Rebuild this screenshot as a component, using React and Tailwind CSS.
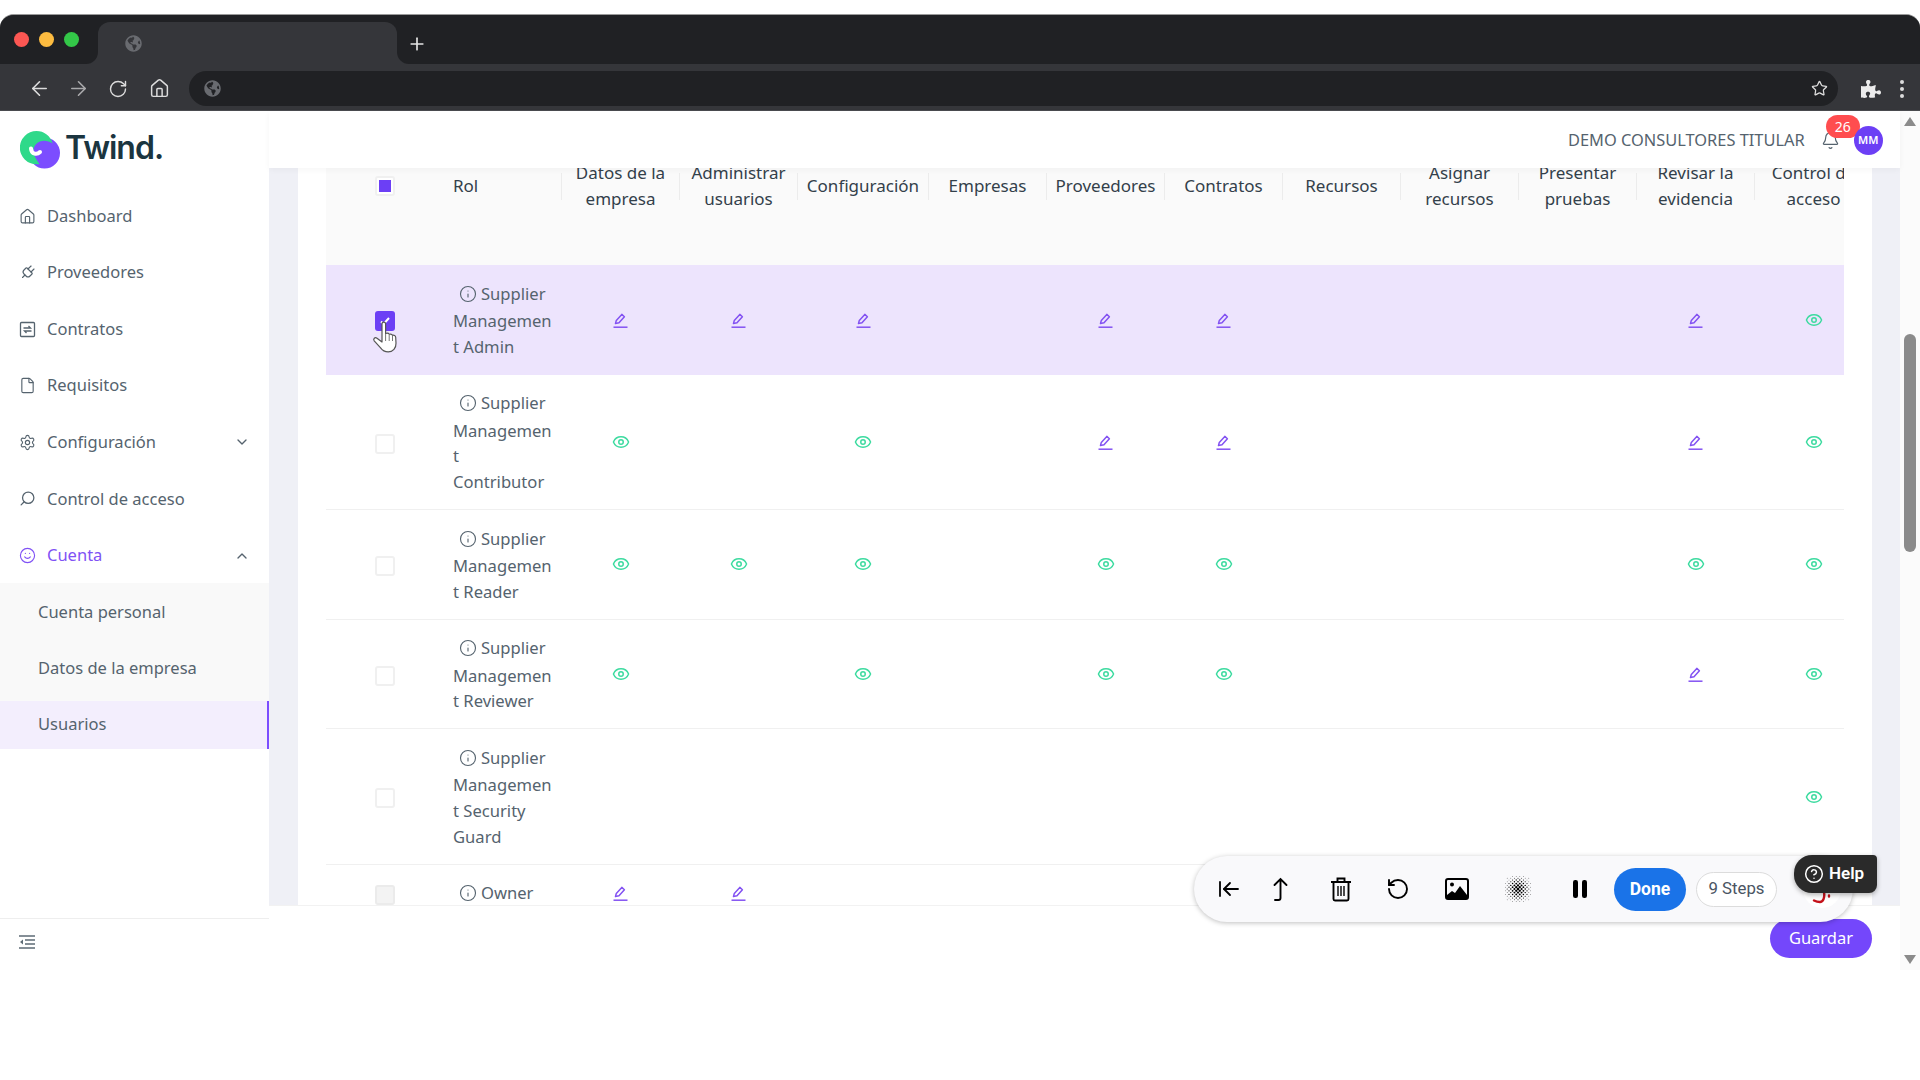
import {
  ArrowLeft,
  ArrowLeftToLine,
  ArrowRight,
  Bell,
  ChevronDown,
  ChevronUp,
  CircleHelp,
  Eye,
  File,
  House,
  Info,
  Plug,
  Plus,
  RotateCcw,
  RotateCw,
  Search,
  Settings,
  Smile,
  Star,
} from "lucide-react";
import { FaGlobeAmericas, FaPuzzlePiece } from "react-icons/fa";

const menu = [
  { label: "Dashboard", icon: <House size={17} strokeWidth={1.6} /> },
  { label: "Proveedores", icon: <Plug size={17} strokeWidth={1.6} className="rotate-45" /> },
  { label: "Contratos", icon: <ContractIcon /> },
  { label: "Requisitos", icon: <File size={17} strokeWidth={1.6} /> },
  { label: "Configuración", icon: <Settings size={17} strokeWidth={1.6} />, chevron: "down" },
  { label: "Control de acceso", icon: <Search size={17} strokeWidth={1.8} className="-scale-x-100" /> },
  { label: "Cuenta", icon: <Smile size={17} strokeWidth={1.6} />, chevron: "up", active: true },
];

const columns = [
  { label: ["Datos de la", "empresa"], width: "w-[118px]" },
  { label: ["Administrar", "usuarios"], width: "w-[118px]" },
  { label: ["Configuración"], width: "w-[131px]" },
  { label: ["Empresas"], width: "w-[118px]" },
  { label: ["Proveedores"], width: "w-[118px]" },
  { label: ["Contratos"], width: "w-[118px]" },
  { label: ["Recursos"], width: "w-[118px]" },
  { label: ["Asignar", "recursos"], width: "w-[118px]" },
  { label: ["Presentar", "pruebas"], width: "w-[118px]" },
  { label: ["Revisar la", "evidencia"], width: "w-[118px]" },
  { label: ["Control de", "acceso"], width: "w-[118px]" },
];

// e = edit, v = view, "" = nothing
const rows = [
  { name: "Supplier Management Admin", perms: ["e", "e", "e", "", "e", "e", "", "", "", "e", "v"], selected: true },
  { name: "Supplier Management Contributor", perms: ["v", "", "v", "", "e", "e", "", "", "", "e", "v"] },
  { name: "Supplier Management Reader", perms: ["v", "v", "v", "", "v", "v", "", "", "", "v", "v"] },
  { name: "Supplier Management Reviewer", perms: ["v", "", "v", "", "v", "v", "", "", "", "e", "v"] },
  { name: "Supplier Management Security Guard", perms: ["", "", "", "", "", "", "", "", "", "", "v"] },
  { name: "Owner", perms: ["e", "e", "", "", "", "", "", "", "", "", ""], disabled: true },
];

function ContractIcon() {
  return (
    <svg width="17" height="17" viewBox="0 0 17 17" fill="none" stroke="currentColor" strokeWidth="1.3">
      <rect x="1.5" y="1.5" width="14" height="14" rx="1" />
      <path d="M4.5 7h7l-2-2M12.5 10h-7l2 2" />
    </svg>
  );
}

function PenIcon() {
  return (
    <svg width="17" height="17" viewBox="0 0 17 17" fill="none" stroke="#8352f2" strokeWidth="1.5" className="inline-block align-[-3px]">
      <path d="M3.5 11.5 4.3 8.4 9.8 2.4 12.4 4.8 7 10.8Z" strokeLinejoin="round" />
      <path d="M1.5 15.2h14" strokeWidth="1.5" />
    </svg>
  );
}

function Logo() {
  return (
    <svg width="40" height="38" viewBox="0 0 40 38">
      <circle cx="24.5" cy="22" r="15.5" fill="#7c4dff" />
      <path d="M16.5 0a16.5 16.5 0 0 1 16 12.5C29 10 24 9 20 10.500 15 12.500 13 17 13.500 21c.6 4 3 8 6 12-1 .2-2 .3-3 .3A16.5 16.5 0 0 1 16.5 0Z" fill="#2fd98a" />
      <path d="M11 17.500c.5 6 6 6.500 9 3.500" fill="none" stroke="#fff" strokeWidth="4" strokeLinecap="round" />
    </svg>
  );
}

function Checkbox({ state }) {
  if (state === "checked") {
    return (
      <span className="inline-flex size-5 items-center justify-center rounded-[3px] bg-[#6c3ff5] align-middle">
        <svg width="12" height="12" viewBox="0 0 12 12" fill="none" stroke="#fff" strokeWidth="2">
          <path d="M2 6.5 4.6 9 10 3" />
        </svg>
      </span>
    );
  }
  if (state === "partial") {
    return (
      <span className="inline-flex size-5 items-center justify-center rounded-[3px] border-2 border-[#f0f0f0] bg-white align-middle">
        <span className="size-3 bg-[#6c3ff5]" />
      </span>
    );
  }
  if (state === "disabled") {
    return <span className="inline-block size-5 rounded-[3px] border-2 border-[#ebebeb] bg-[#f3f3f3] align-middle" />;
  }
  return <span className="inline-block size-5 rounded-[3px] border-2 border-[#f0f0f0] bg-white align-middle" />;
}

function HandCursor() {
  return (
    <svg width="27" height="33" viewBox="0 0 27 33" className="absolute left-[372px] top-[321px] z-10">
      <path
        d="M10 3c0-2.6 3.6-2.6 3.6 0v9.5c1.6-.6 3-.3 3.6.8 1.4-.5 2.8-.1 3.3 1 1.5-.4 3 .4 3.2 2l.3 6c.2 4.6-3 8.6-7.8 8.6-3.6 0-5.8-1.4-7.6-4L2.2 19.8c-1.4-2 .8-4 2.8-2.6L10 21Z"
        fill="#fff"
        stroke="#555"
        strokeWidth="1.2"
        strokeLinejoin="round"
      />
      <path d="M13.6 13v7M17.2 14v6M20.5 15v5" stroke="#777" strokeWidth="1" fill="none" />
    </svg>
  );
}

function Halftone() {
  const dots = [];
  for (let y = -7; y <= 7; y++) {
    for (let x = -7; x <= 7; x++) {
      const d = Math.hypot(x, y);
      if ((x + y) % 2 === 0 && d < 8.5) {
        dots.push(<circle key={x + "_" + y} cx={14 + x * 1.8} cy={14 + y * 1.8} r={Math.max(0.35, 1.35 - d * 0.14)} fill="#000" />);
      }
    }
  }
  return (
    <svg width="28" height="28" viewBox="0 0 28 28">
      {dots}
    </svg>
  );
}

function ChromeBar() {
  return (
    <div className="mt-[14px] overflow-hidden rounded-t-[14px] border-t border-[#9a9a9a] bg-[#35363a]">
      <div className="flex h-[49px]">
        <div className="flex w-[98px] items-start gap-[10px] rounded-br-xl bg-[#202124] pl-[14px] pt-[17px]">
          <span className="size-[15px] rounded-full bg-[#fc5753]" />
          <span className="size-[15px] rounded-full bg-[#fdbc40]" />
          <span className="size-[15px] rounded-full bg-[#33c748]" />
        </div>
        <div className="w-[299px] bg-[#202124]">
          <div className="mt-[7px] flex h-[42px] items-center rounded-t-xl bg-[#35363a] pl-[27px]">
            <FaGlobeAmericas size={17} color="#696b70" />
          </div>
        </div>
        <div className="flex flex-1 items-center rounded-bl-xl bg-[#202124] pl-[10px] pt-[8px]">
          <Plus size={20} color="#e4e4e4" strokeWidth={2} />
        </div>
      </div>
      <div className="flex h-[47px] items-center border-b border-[#4a4b4f] pt-[3px] text-[#dcdcdc]">
        <ArrowLeft size={23} strokeWidth={1.7} className="ml-[28px]" />
        <ArrowRight size={23} strokeWidth={1.7} className="ml-[16px] text-[#a9a9ab]" />
        <RotateCw size={20} strokeWidth={1.7} className="ml-[18px]" />
        <House size={21} strokeWidth={1.7} className="ml-[21px]" />
        <div className="ml-[19px] flex h-[35px] w-[1649px] items-center rounded-full bg-[#202124] pl-[15px] pr-[10px]">
          <FaGlobeAmericas size={17} color="#696b70" />
          <Star size={17} strokeWidth={1.8} className="ml-auto" />
        </div>
        <FaPuzzlePiece size={20} color="#ececec" className="ml-[23px]" />
        <div className="ml-[19px] flex flex-col gap-[3px]">
          <span className="size-[4px] rounded-full bg-[#dcdcdc]" />
          <span className="size-[4px] rounded-full bg-[#dcdcdc]" />
          <span className="size-[4px] rounded-full bg-[#dcdcdc]" />
        </div>
      </div>
    </div>
  );
}

function Sidebar() {
  return (
    <aside className="flex w-[269px] shrink-0 flex-col bg-white text-[16.5px] text-[#55636e]">
      <div className="flex h-[75px] items-start gap-[5px] pl-[20px] pt-[20px]">
        <Logo />
        <span className="mt-[-7px] font-['Inter',sans-serif] text-[32px] font-semibold tracking-[-1px] text-[#1b3540]">Twind.</span>
      </div>
      <nav className="flex flex-col gap-[8.6px] pt-[6px]">
        {menu.map((item) => (
          <div key={item.label} className={"flex h-12 items-center pl-[19px] pr-[19px] " + (item.active ? "text-[#8052f5]" : "")}>
            <span className="flex w-[28px] shrink-0">{item.icon}</span>
            <span>{item.label}</span>
            {item.chevron === "down" && <ChevronDown size={16} className="ml-auto text-[#55636e]" />}
            {item.chevron === "up" && <ChevronUp size={16} className="ml-auto text-[#55636e]" />}
          </div>
        ))}
      </nav>
      <div className="mt-[3px] flex flex-col">
        <div className="flex h-[118px] flex-col gap-[8px] bg-[#f9f9f9] pt-[6px]">
          <div className="flex h-12 items-center pl-[38px]">Cuenta personal</div>
          <div className="flex h-12 items-center pl-[38px]">Datos de la empresa</div>
        </div>
        <div className="flex h-12 items-center border-r-2 border-[#7c4dff] bg-[#f3eefd] pl-[38px]">Usuarios</div>
      </div>
      <div className="mt-auto flex h-[52px] items-center border-t border-[#eeeeee] pb-[5px] pl-[19px]">
        <svg width="16" height="14" viewBox="0 0 16 14" stroke="#5d6b75" strokeWidth="1.4">
          <path d="M0 1h16M6 5h10M6 9h10M0 13h16" />
          <path d="M4 4.5v5L1 7Z" fill="#5d6b75" stroke="none" />
        </svg>
      </div>
    </aside>
  );
}

function RoleTable() {
  return (
    <table className="-mt-[7px] w-[1545px] table-fixed text-[16.6px] leading-[25.6px] text-[#55636e]">
      <colgroup>
        <col className="w-[118px]" />
        <col className="w-[117px]" />
        {columns.map((col) => (
          <col key={col.label[0]} className={col.width} />
        ))}
      </colgroup>
      <thead>
        <tr className="h-[104px] bg-[#fafafa] text-[17px] leading-[26px] text-[#33404a]">
          <th className="p-0 align-top font-normal">
            <div className="flex h-[50px] items-center justify-center">
              <Checkbox state="partial" />
            </div>
          </th>
          <th className="p-0 align-top font-normal">
            <div className="flex h-[50px] items-center pl-[9px]">Rol</div>
          </th>
          {columns.map((col) => (
            <th key={col.label[0]} className="relative p-0 align-top font-normal">
              <span className="absolute left-0 top-[12px] h-[27px] w-px bg-[#ececec]" />
              <div className="flex h-[50px] flex-col items-center justify-center whitespace-nowrap pl-px">
                {col.label.map((line) => (
                  <span key={line}>{line}</span>
                ))}
              </div>
            </th>
          ))}
        </tr>
      </thead>
      <tbody>
        {rows.map((row) => (
          <tr key={row.name} className={"border-b " + (row.selected ? "border-[#ede4fd] bg-[#ede4fd]" : "border-[#f0f0f0]")}>
            <td className="p-0 text-center">
              <Checkbox state={row.selected ? "checked" : row.disabled ? "disabled" : "empty"} />
            </td>
            <td className="pb-[14.4px] pl-[9px] pr-2 pt-[15.6px] wrap-break-word">
              <Info size={18} strokeWidth={1.5} className="mb-[5.5px] ml-[6px] mr-[4px] inline-block align-[-8.5px]" />
              {row.name}
            </td>
            {row.perms.map((perm, i) => (
              <td key={i} className="p-0 pl-px text-center">
                {perm === "e" && <PenIcon />}
                {perm === "v" && <Eye size={18} color="#3ddba0" strokeWidth={2} className="inline-block align-[-3px]" />}
              </td>
            ))}
          </tr>
        ))}
      </tbody>
    </table>
  );
}

function Recorder() {
  return (
    <>
      <div className="absolute left-[1194px] top-[856px] flex h-[66px] w-[659px] items-center rounded-full bg-[#f9f9fb] pl-[23px] text-black shadow-[0_1px_5px_rgba(0,0,0,0.25)]">
        <ArrowLeftToLine size={24} strokeWidth={1.8} />
        <svg width="24" height="24" viewBox="0 0 24 24" fill="none" stroke="#000" strokeWidth="1.9" className="ml-[27px]">
          <path d="M7 23h3.5a2 2 0 0 0 2-2V2M6.5 8 12.5 2l6 6" strokeLinecap="round" />
        </svg>
        <svg width="24" height="26" viewBox="0 0 24 26" fill="none" stroke="#000" strokeWidth="1.9" className="ml-[37px]">
          <path d="M2 6h20M8.5 5.5V2.5h7v3M4.5 6v17a1.5 1.5 0 0 0 1.5 1.5h12a1.5 1.5 0 0 0 1.5-1.5V6" />
          <path d="M9 10v10M12 10v10M15 10v10" strokeWidth="1.4" />
        </svg>
        <RotateCcw size={24} strokeWidth={1.9} className="ml-[33px]" />
        <svg width="24" height="22" viewBox="0 0 24 22" className="ml-[35px]">
          <rect x="1" y="1" width="22" height="20" rx="2" fill="none" stroke="#000" strokeWidth="2" />
          <circle cx="7" cy="6.5" r="2" fill="#000" />
          <path d="M2 20v-3l5-4 3 2 5-7 7 9v3Z" fill="#000" />
        </svg>
        <div className="ml-[35px]">
          <Halftone />
        </div>
        <svg width="16" height="20" viewBox="0 0 16 20" className="ml-[40px]">
          <rect x="1" y="1" width="5" height="18" rx="2.2" fill="#000" />
          <rect x="10" y="1" width="5" height="18" rx="2.2" fill="#000" />
        </svg>
        <div className="ml-[26px] flex h-[43px] w-[72px] items-center justify-center rounded-full bg-[#1a73e8] font-['Roboto',sans-serif] text-[17.5px] font-bold text-white">
          Done
        </div>
        <div className="ml-[10px] flex h-[35px] w-[81px] items-center justify-center rounded-full border border-[#dcdcdc] bg-white font-['Roboto',sans-serif] text-[16.8px] text-[#4b5563]">
          9 Steps
        </div>
        <div className="ml-[26px] flex size-[38px] items-end justify-center rounded-full bg-white">
          <svg width="22" height="16" viewBox="0 0 22 16" fill="none" stroke="#c4111a" strokeWidth="2.4">
            <path d="M13 0c1 6-1 10-4 10-2 0-4-.5-6-1.500M18 3.500v1" strokeLinecap="round" />
          </svg>
        </div>
      </div>
      <div className="absolute left-[1794px] top-[855px] flex h-[38px] w-[83px] items-center gap-[5px] rounded-[18px] rounded-tr-[4px] rounded-br-[8px] bg-[#2a2a2a] pl-[10px] font-['Roboto',sans-serif] text-[17px] font-semibold text-white shadow-[0_2px_5px_rgba(0,0,0,0.3)]">
        <CircleHelp size={20} strokeWidth={1.8} />
        Help
      </div>
    </>
  );
}

function App() {
  return (
    <div className="relative h-[1080px] w-[1920px] overflow-hidden bg-white font-['Noto_Sans',sans-serif]">
      <ChromeBar />
      <div className="flex h-[859px]">
        <Sidebar />
        <main className="flex min-w-0 flex-1 flex-col">
          <header className="relative z-10 flex h-[57px] shrink-0 items-center bg-white pl-[1299px] pt-[2px] text-[#55636e] shadow-[0_2px_6px_rgba(0,0,0,0.04)]">
            <span className="whitespace-nowrap text-[16.4px]">DEMO CONSULTORES TITULAR</span>
            <div className="relative ml-[16px] flex items-center">
              <Bell size={19} strokeWidth={1.5} />
              <span className="absolute left-[5px] top-[-16px] flex h-[23px] w-[34px] items-center justify-center rounded-full bg-[#ff4d4f] text-[14px] text-white">26</span>
            </div>
            <span className="relative ml-[14px] flex size-[29px] items-center justify-center rounded-full bg-[#6c3ff5] text-[11px] font-semibold text-white">MM</span>
          </header>
          <div className="min-h-0 flex-1 bg-[#eff0f6] pl-[29px] pr-[28px]">
            <div className="h-full bg-white px-[28px]">
              <div className="h-full overflow-hidden">
                <RoleTable />
              </div>
            </div>
          </div>
          <footer className="flex h-[65px] shrink-0 justify-end border-t border-[#f2f2f2] bg-white pr-[28px] pt-[13px]">
            <button className="h-[39px] w-[102px] rounded-full bg-[#7447fb] text-[16.5px] text-white">Guardar</button>
          </footer>
        </main>
        <div className="flex w-5 shrink-0 flex-col items-center bg-[#fbfbfb] pt-[6px]">
          <span className="size-0 border-x-[6px] border-b-[9px] border-x-transparent border-b-[#8b8b8b]" />
          <div className="mt-[208px] h-[218px] w-[12px] rounded-full bg-[#8b8b8b]" />
          <span className="mt-[403px] size-0 border-x-[6px] border-t-[9px] border-x-transparent border-t-[#8b8b8b]" />
        </div>
      </div>
      <HandCursor />
      <Recorder />
    </div>
  );
}

export default App;
